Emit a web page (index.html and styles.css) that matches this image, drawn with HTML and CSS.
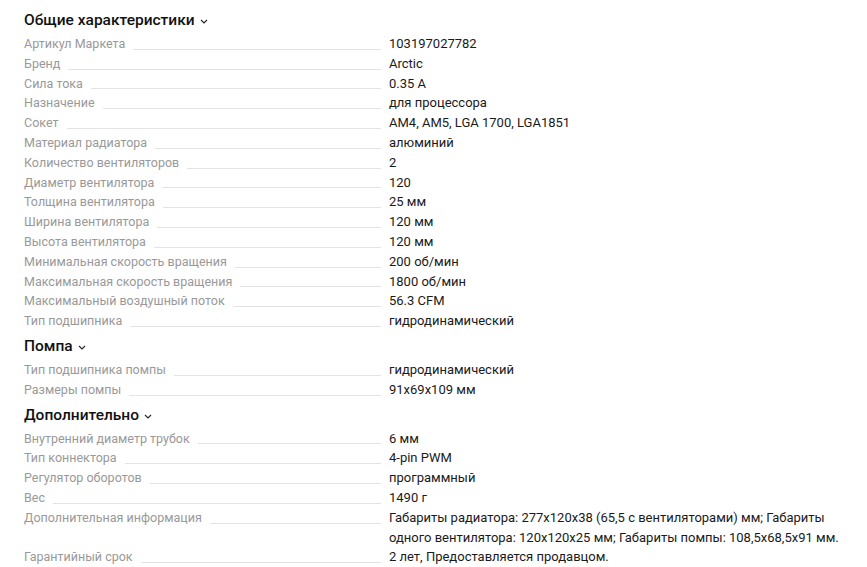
FILE: index.html
```html
<!DOCTYPE html>
<html lang="ru">
<head>
<meta charset="utf-8">
<title>Характеристики</title>
<link rel="stylesheet" href="styles.css">
</head>
<body>
<div class="specs">
  <h2 class="group-title">Общие характеристики <svg class="chev" width="8" height="5" viewBox="0 0 8 5"><path d="M1 1l3 3 3-3" fill="none" stroke="#222" stroke-width="1.1"/></svg></h2>
  <dl class="group">
    <div class="row"><dt><span>Артикул Маркета</span><i></i></dt><dd>103197027782</dd></div>
    <div class="row"><dt><span>Бренд</span><i></i></dt><dd>Arctic</dd></div>
    <div class="row"><dt><span>Сила тока</span><i></i></dt><dd>0.35 A</dd></div>
    <div class="row"><dt><span>Назначение</span><i></i></dt><dd>для процессора</dd></div>
    <div class="row"><dt><span>Сокет</span><i></i></dt><dd>AM4, AM5, LGA 1700, LGA1851</dd></div>
    <div class="row"><dt><span>Материал радиатора</span><i></i></dt><dd>алюминий</dd></div>
    <div class="row"><dt><span>Количество вентиляторов</span><i></i></dt><dd>2</dd></div>
    <div class="row"><dt><span>Диаметр вентилятора</span><i></i></dt><dd>120</dd></div>
    <div class="row"><dt><span>Толщина вентилятора</span><i></i></dt><dd>25 мм</dd></div>
    <div class="row"><dt><span>Ширина вентилятора</span><i></i></dt><dd>120 мм</dd></div>
    <div class="row"><dt><span>Высота вентилятора</span><i></i></dt><dd>120 мм</dd></div>
    <div class="row"><dt><span>Минимальная скорость вращения</span><i></i></dt><dd>200 об/мин</dd></div>
    <div class="row"><dt><span>Максимальная скорость вращения</span><i></i></dt><dd>1800 об/мин</dd></div>
    <div class="row"><dt><span>Максимальный воздушный поток</span><i></i></dt><dd>56.3 CFM</dd></div>
    <div class="row"><dt><span>Тип подшипника</span><i></i></dt><dd>гидродинамический</dd></div>
  </dl>
  <h2 class="group-title">Помпа <svg class="chev" width="8" height="5" viewBox="0 0 8 5"><path d="M1 1l3 3 3-3" fill="none" stroke="#222" stroke-width="1.1"/></svg></h2>
  <dl class="group">
    <div class="row"><dt><span>Тип подшипника помпы</span><i></i></dt><dd>гидродинамический</dd></div>
    <div class="row"><dt><span>Размеры помпы</span><i></i></dt><dd>91x69x109 мм</dd></div>
  </dl>
  <h2 class="group-title">Дополнительно <svg class="chev" width="8" height="5" viewBox="0 0 8 5"><path d="M1 1l3 3 3-3" fill="none" stroke="#222" stroke-width="1.1"/></svg></h2>
  <dl class="group">
    <div class="row"><dt><span>Внутренний диаметр трубок</span><i></i></dt><dd>6 мм</dd></div>
    <div class="row"><dt><span>Тип коннектора</span><i></i></dt><dd>4-pin PWM</dd></div>
    <div class="row"><dt><span>Регулятор оборотов</span><i></i></dt><dd>программный</dd></div>
    <div class="row"><dt><span>Вес</span><i></i></dt><dd>1490 г</dd></div>
    <div class="row"><dt><span>Дополнительная информация</span><i></i></dt><dd>Габариты радиатора: 277x120x38 (65,5 с вентиляторами) мм; Габариты одного вентилятора: 120x120x25 мм; Габариты помпы: 108,5x68,5x91 мм.</dd></div>
    <div class="row"><dt><span>Гарантийный срок</span><i></i></dt><dd>2 лет, Предоставляется продавцом.</dd></div>
  </dl>
</div>
</body>
</html>
```
FILE: styles.css
```css
html, body {
  margin: 0;
  padding: 0;
  background: #fff;
}
body {
  font-family: Roboto, "Noto Sans", sans-serif;
  color: #1a1a1a;
}
.specs {
  padding: 8px 0 0 24px;
  width: 840px;
}
.group-title {
  margin: 3px 0 2px;
  font-size: 15.5px;
  line-height: 24px;
  font-weight: 500;
  color: #111;
  display: flex;
  align-items: center;
  gap: 5px;
}
.group-title:first-child {
  margin-top: 0;
}
.chev {
  margin-top: 3px;
}
.group {
  margin: 0;
}
.row {
  display: grid;
  grid-template-columns: 357px 1fr;
  column-gap: 8px;
  align-items: start;
  font-size: 13px;
  line-height: 19.8px;
}
.row dt {
  display: flex;
  color: #999;
  font-size: 12.5px;
  height: 19.8px;
}
.row dt span {
  white-space: nowrap;
}
.row dt i {
  flex: 1;
  align-self: flex-end;
  height: 1px;
  background: #e3e3e3;
  margin: 0 0 4px 8px;
}
.row dd {
  margin: 0;
  color: #1a1a1a;
}
```
